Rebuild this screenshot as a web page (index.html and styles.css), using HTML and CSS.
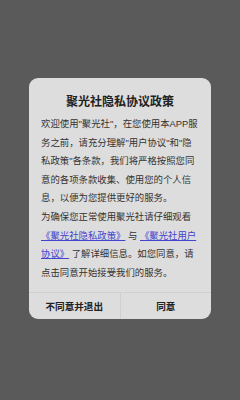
FILE: index.html
```html
<!DOCTYPE html>
<html lang="zh-CN">
<head>
    <meta charset="UTF-8">
    <meta name="viewport" content="width=device-width, initial-scale=1.0">
    <title>聚光社隐私协议政策</title>
    <link rel="stylesheet" href="styles.css">
</head>
<body>
    <div class="overlay">
        <div class="dialog">
            <h1 class="dialog-title">聚光社隐私协议政策</h1>
            <div class="dialog-body">
                <p>欢迎使用"聚光社"，在您使用本APP服务之前，请充分理解"用户协议"和"隐私政策"各条款，我们将严格按照您同意的各项条款收集、使用您的个人信息，以便为您提供更好的服务。</p>
                <p>为确保您正常使用聚光社请仔细观看<a href="#">《聚光社隐私政策》</a> 与 <a href="#">《聚光社用户协议》</a> 了解详细信息。如您同意，请点击同意开始接受我们的服务。</p>
            </div>
            <div class="dialog-buttons">
                <button class="btn" onclick="window.close()">不同意并退出</button>
                <button class="btn" onclick="document.querySelector('.overlay').style.display = 'none'">同意</button>
            </div>
        </div>
    </div>
</body>
</html>
```

FILE: styles.css
```css
body {
    margin: 0;
    background: #5a5a5a;
    font-family: "Liberation Sans", "Noto Sans CJK SC", sans-serif;
}

.overlay {
    height: 400px;
    display: flex;
    justify-content: center;
    align-items: flex-start;
    padding-top: 78px;
    box-sizing: border-box;
}

.dialog {
    width: 182px;
    background: #dddddd;
    border-radius: 9px;
    overflow: hidden;
}

.dialog-title {
    margin: 0;
    padding-top: 16px;
    font-size: 12px;
    line-height: 16px;
    font-weight: bold;
    text-align: center;
    color: #222;
}

.dialog-body {
    margin-top: 5px;
    padding: 0 12px 10px 12px;
    font-size: 9.4px;
    line-height: 18.6px;
    color: #333;
}

.dialog-body p {
    margin: 0;
}

.dialog-body a {
    color: #4343d0;
    text-decoration: underline;
}

.dialog-buttons {
    display: flex;
    border-top: 1px solid #d0d0d0;
}

.btn {
    flex: 1;
    height: 26px;
    border: none;
    background: none;
    padding: 0;
    font-family: inherit;
    font-size: 9.6px;
    font-weight: bold;
    color: #222;
}

.btn + .btn {
    border-left: 1px solid #d0d0d0;
}
```
